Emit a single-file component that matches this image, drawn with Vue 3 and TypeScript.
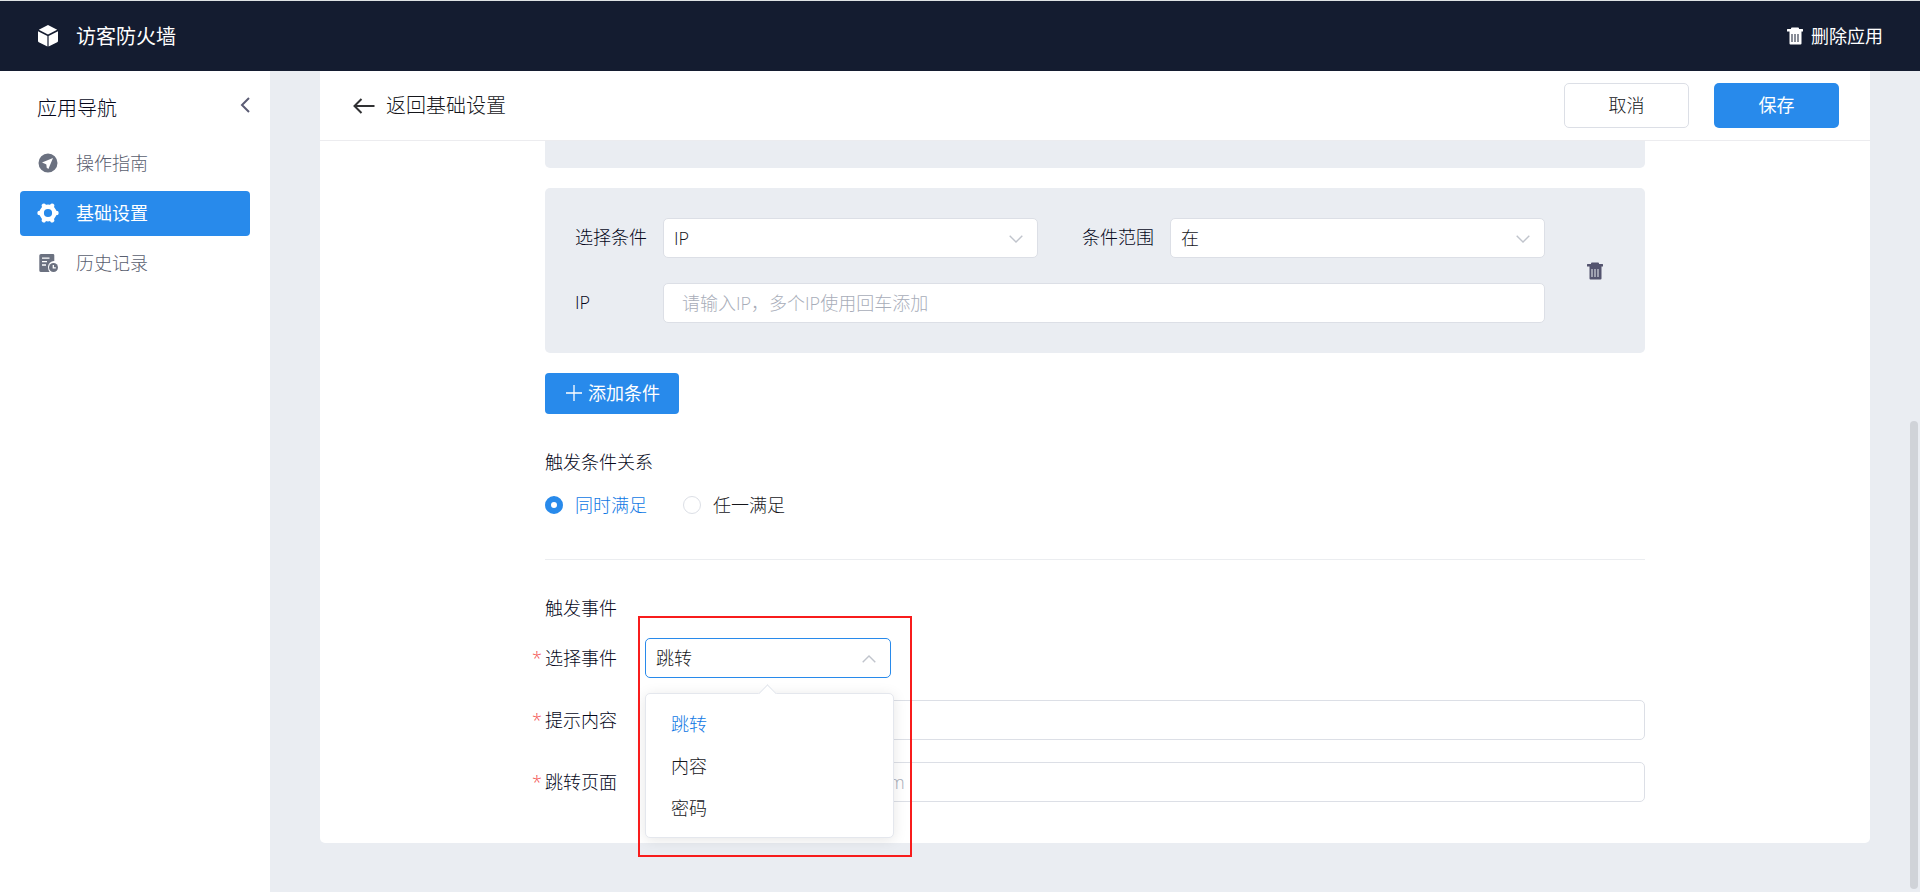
<script setup lang="ts">
import { ref } from 'vue'

interface NavItem {
  key: string
  label: string
}

const navItems: NavItem[] = [
  { key: 'guide', label: '操作指南' },
  { key: 'basic', label: '基础设置' },
  { key: 'history', label: '历史记录' },
]
const activeNav = ref('basic')

const condition = ref('IP')
const range = ref('在')
const ipList = ref('')
const relation = ref('all')
const eventOptions: string[] = ['跳转', '内容', '密码']
const eventType = ref('跳转')
const tipContent = ref('')
const jumpPage = ref('')
</script>

<template>
  <div class="app">
    <header class="topbar">
      <svg class="cube" viewBox="0 0 20 22" aria-hidden="true">
        <path d="M10 0 19.2 4.8 10 9.6.8 4.8Z" />
        <path d="M0 6.2 9.4 11v10.6L.8 17.2a1.4 1.4 0 0 1-.8-1.300Z" />
        <path d="M20 6.200 10.600 11v10.600l8.600-4.400a1.400 1.400 0 0 0 .8-1.300Z" />
      </svg>
      <h1 class="app-name">访客防火墙</h1>
      <button class="delete-app" type="button">
        <svg class="trash" viewBox="0 0 18 18" aria-hidden="true">
          <path fill-rule="evenodd" d="M5 1.500Q5 .5 6 .5h6q1 0 1 1v.5h3.500q.5 0 .5.500v2h-1.500v12q0 1-1 1h-10q-1 0-1-1v-12H1v-2q0-.5.5-.5H5ZM5.500 7v8h1V7Zm3 0v8h1V7Zm3 0v8h1V7Z" />
        </svg>
        <span>删除应用</span>
      </button>
    </header>

    <div class="layout">
      <aside class="sidebar">
        <div class="nav-head">
          <h2 class="nav-title">应用导航</h2>
          <button class="collapse" type="button" aria-label="收起">
            <svg viewBox="0 0 10 16"><path d="M9 1 2 8l7 7" /></svg>
          </button>
        </div>
        <nav class="nav">
          <a
            v-for="item in navItems"
            :key="item.key"
            href="#"
            class="nav-item"
            :class="{ active: item.key === activeNav }"
            @click.prevent="activeNav = item.key"
          >
            <svg v-if="item.key === 'guide'" class="nav-icon" viewBox="0 0 20 20" aria-hidden="true">
              <path fill-rule="evenodd" d="M10 .5a9.500 9.500 0 1 1 0 19 9.500 9.500 0 0 1 0-19ZM15 5 4 9.600l4 1.700.4.400.3 3 1.700 1.400Z" />
            </svg>
            <svg v-else-if="item.key === 'basic'" class="nav-icon" viewBox="0 0 22 22" aria-hidden="true">
              <circle class="ring" cx="11" cy="11" r="6.300" />
              <path class="teeth" d="M2.500 11h.8M18.700 11h.8M6.800 3.700l.4.700M14.800 17.600l.4.700M15.200 3.700l-.4.700M7.200 17.600l-.4.700" />
            </svg>
            <svg v-else class="nav-icon" viewBox="0 0 20 20" aria-hidden="true">
              <path d="M3 1h12q1.300 0 1.300 1.300V8A6 6 0 0 0 10 14q0 2.700 1.600 5H3q-1.700 0-1.700-1.500V2.500Q1.300 1 3 1Z" />
              <path class="line" d="M4 5.200h7.500M4 8.700h5M4 12h4" />
              <circle cx="15.500" cy="14.500" r="4.500" />
              <path class="line" d="M15.300 12v2.800h2.500" />
            </svg>
            <span>{{ item.label }}</span>
          </a>
        </nav>
      </aside>

      <main class="main">
        <section class="card">
          <div class="card-head">
            <a class="back" href="#" @click.prevent>
              <svg viewBox="0 0 22 16" aria-hidden="true"><path d="M8.500 1 1.500 8l7 7M1.500 8h20" /></svg>
              <span>返回基础设置</span>
            </a>
            <div class="actions">
              <button class="btn plain" type="button">取消</button>
              <button class="btn primary" type="button">保存</button>
            </div>
          </div>

          <form class="content" @submit.prevent>
            <div class="panel-tail"></div>

            <div class="panel">
              <div class="panel-fields">
                <div class="panel-row">
                  <div class="field">
                    <label for="condition">选择条件</label>
                    <div class="select-box">
                      <select id="condition" v-model="condition"><option>IP</option></select>
                      <svg class="caret" viewBox="0 0 14 8"><path d="m.7.7 6.300 6.300L13.300.7" /></svg>
                    </div>
                  </div>
                  <div class="field">
                    <label for="range">条件范围</label>
                    <div class="select-box">
                      <select id="range" v-model="range"><option>在</option></select>
                      <svg class="caret" viewBox="0 0 14 8"><path d="m.7.7 6.300 6.300L13.300.7" /></svg>
                    </div>
                  </div>
                </div>
                <div class="field">
                  <label for="ip">IP</label>
                  <input id="ip" v-model="ipList" class="text-input" type="text" placeholder="请输入IP，多个IP使用回车添加" />
                </div>
              </div>
              <button class="remove" type="button" aria-label="删除条件">
                <svg class="trash" viewBox="0 0 18 18">
                  <path fill-rule="evenodd" d="M5 1.500Q5 .5 6 .5h6q1 0 1 1v.5h3.500q.5 0 .5.500v2h-1.500v12q0 1-1 1h-10q-1 0-1-1v-12H1v-2q0-.5.5-.5H5ZM5.500 7v8h1V7Zm3 0v8h1V7Zm3 0v8h1V7Z" />
                </svg>
              </button>
            </div>

            <button class="btn-add" type="button">
              <svg viewBox="0 0 16 16" aria-hidden="true"><path d="M8 0v16M0 8h16" /></svg>
              <span>添加条件</span>
            </button>

            <fieldset class="relation">
              <legend>触发条件关系</legend>
              <div class="radios">
                <label class="radio">
                  <input v-model="relation" type="radio" name="relation" value="all" />
                  <span>同时满足</span>
                </label>
                <label class="radio">
                  <input v-model="relation" type="radio" name="relation" value="any" />
                  <span>任一满足</span>
                </label>
              </div>
            </fieldset>

            <h3 class="section-title">触发事件</h3>

            <div class="event-rows">
              <div class="event-row">
                <label class="required" for="event">选择事件</label>
                <div class="select-box event-select">
                  <select id="event" v-model="eventType">
                    <option v-for="o in eventOptions" :key="o">{{ o }}</option>
                  </select>
                  <svg class="caret" viewBox="0 0 14 8"><path d="M.7 7.300 7 1l6.300 6.300" /></svg>
                  <ul class="menu">
                    <li v-for="o in eventOptions" :key="o" :class="{ chosen: o === eventType }" @click="eventType = o">
                      {{ o }}
                    </li>
                  </ul>
                  <div class="marker"></div>
                </div>
              </div>
              <div class="event-row">
                <label class="required" for="tip">提示内容</label>
                <input id="tip" v-model="tipContent" class="text-input" type="text" />
              </div>
              <div class="event-row">
                <label class="required" for="jump">跳转页面</label>
                <input id="jump" v-model="jumpPage" class="text-input" type="text" placeholder="例如：https://www.baidu.com" />
              </div>
            </div>
          </form>
        </section>
        <div class="scroll-thumb"></div>
      </main>
    </div>
  </div>
</template>

<style>
body {
  margin: 0;
}
</style>

<style scoped>
.app {
  min-height: 100vh;
  display: flex;
  flex-direction: column;
  color: #05071a;
  background: #eaedf2;
  font-family: 'Open Sans', 'Noto Sans CJK SC', sans-serif;
  font-size: 18px;
  font-weight: 300;
  line-height: 24px;
}
.app * {
  box-sizing: border-box;
}
button,
input,
select {
  font: inherit;
  color: inherit;
  margin: 0;
}
button {
  border: 0;
  padding: 0;
  background: none;
  cursor: pointer;
}
h1,
h2,
h3 {
  margin: 0;
  font-weight: inherit;
}
a {
  color: inherit;
  text-decoration: none;
}
svg {
  display: block;
  flex: none;
}

.topbar {
  display: flex;
  align-items: center;
  height: 71px;
  padding: 0 37px 0 38px;
  border-top: 1px solid #dfe3e4;
  background: #141c30;
  color: #fff;
  font-weight: 400;
}
.cube {
  width: 20px;
  height: 22px;
  margin-right: 18px;
  fill: #fff;
}
.app-name {
  padding-top: 2px;
  font-size: 20px;
}
.delete-app {
  display: flex;
  align-items: center;
  gap: 7px;
  margin-left: auto;
}
.trash {
  width: 18px;
  height: 18px;
  fill: currentColor;
}

.layout {
  flex: 1;
  display: flex;
}
.sidebar {
  flex: none;
  width: 270px;
  padding: 20px 20px 0;
  background: #fff;
}
.nav-head {
  display: flex;
  align-items: flex-start;
  justify-content: space-between;
  height: 50px;
  padding: 6px 0 0 17px;
}
.nav-title {
  font-size: 20px;
}
.collapse svg {
  width: 10px;
  height: 16px;
  fill: none;
  stroke: #5b5c74;
  stroke-width: 2;
}
.nav {
  display: flex;
  flex-direction: column;
  gap: 5px;
}
.nav-item {
  display: flex;
  align-items: center;
  gap: 17px;
  height: 45px;
  padding: 0 0 1px 17px;
  border-radius: 4px;
  color: #5a6070;
}
.nav-item.active {
  background: #288aeb;
  color: #fff;
  font-weight: 400;
}
.nav-icon {
  width: 22px;
  height: 20px;
  fill: #6b7180;
}
.nav-item.active .nav-icon {
  height: 22px;
  fill: #fff;
}
.nav-icon .line {
  fill: none;
  stroke: #fff;
  stroke-width: 1.3;
}
.nav-icon .ring {
  fill: none;
  stroke: currentColor;
  stroke-width: 4.4;
}
.nav-icon .teeth {
  fill: none;
  stroke: currentColor;
  stroke-width: 4.4;
  stroke-linecap: round;
}

.main {
  flex: 1;
  min-width: 0;
  position: relative;
  padding: 0 50px 49px;
}
.card {
  border-radius: 0 0 5px 5px;
  background: #fff;
}
.card-head {
  display: flex;
  align-items: center;
  justify-content: space-between;
  height: 70px;
  padding: 0 31px 0 33px;
  border-bottom: 1px solid #ececef;
}
.back {
  display: flex;
  align-items: center;
  gap: 11px;
  color: #15161a;
  font-size: 20px;
}
.back svg {
  width: 22px;
  height: 16px;
  fill: none;
  stroke: #303133;
  stroke-width: 2;
}
.actions {
  display: flex;
  gap: 25px;
}
.btn {
  width: 125px;
  height: 45px;
  padding-bottom: 2px;
  border-radius: 5px;
}
.plain {
  border: 1px solid #dcdfe6;
  background: #fff;
  color: #15161a;
}
.primary {
  background: #288aeb;
  color: #fff;
  font-weight: 400;
}

.content {
  max-width: 1100px;
  margin: 0 auto;
  padding-bottom: 41px;
}
.panel-tail {
  height: 27px;
  border-radius: 0 0 5px 5px;
  background: #eaedf2;
}
.panel {
  display: flex;
  margin-top: 20px;
  padding: 30px 0 30px 30px;
  border-radius: 5px;
  background: #eaedf2;
}
.panel-fields {
  flex: 1;
  display: flex;
  flex-direction: column;
  gap: 25px;
}
.panel-row {
  display: grid;
  grid-template-columns: 1fr 1fr;
  gap: 44px;
}
.field {
  display: flex;
  align-items: center;
}
.field > label {
  flex: none;
  width: 88px;
  padding-bottom: 2px;
}
.select-box {
  position: relative;
  flex: 1;
}
select,
.text-input {
  display: block;
  width: 100%;
  height: 40px;
  border: 1px solid #dcdfe6;
  border-radius: 5px;
  background: #fff;
  color: #15161a;
  outline: 0;
}
select {
  appearance: none;
  padding: 0 40px 0 10px;
}
.text-input {
  min-width: 0;
  padding: 0 18px;
}
.text-input::placeholder {
  color: #a8adb9;
  opacity: 1;
}
.caret {
  position: absolute;
  top: 17px;
  right: 15px;
  width: 14px;
  height: 8px;
  fill: none;
  stroke: #c0c4cc;
  stroke-width: 1.4;
  pointer-events: none;
}
.remove {
  flex: none;
  width: 100px;
  display: flex;
  align-items: center;
  justify-content: center;
  color: #54546f;
}

.btn-add {
  display: flex;
  align-items: center;
  gap: 6px;
  height: 41px;
  margin-top: 20px;
  padding: 0 19px 2px 21px;
  border-radius: 4px;
  background: #288aeb;
  color: #fff;
  font-weight: 400;
}
.btn-add svg {
  width: 16px;
  height: 16px;
  stroke: currentColor;
  stroke-width: 1.3;
}

.relation {
  margin: 36px 0 0;
  padding: 0 0 42px;
  border: 0;
  border-bottom: 1px solid #ebedf0;
}
.relation legend {
  padding: 0;
}
.radios {
  display: flex;
  gap: 36px;
  margin-top: 19px;
}
.radio {
  display: flex;
  align-items: center;
  gap: 12px;
  color: #15161a;
}
.radio input {
  appearance: none;
  width: 18px;
  height: 18px;
  border: 1px solid #dcdfe6;
  border-radius: 50%;
  background: #fff;
}
.radio input:checked {
  border: 6px solid #288aeb;
}
.radio:has(input:checked) {
  color: #0f78e4;
}

.section-title {
  margin-top: 36px;
  font-size: 18px;
}
.event-rows {
  display: flex;
  flex-direction: column;
  gap: 22px;
  margin-top: 18px;
}
.event-row {
  display: flex;
  align-items: center;
}
.required {
  position: relative;
  flex: none;
  width: 100px;
}
.required::before {
  content: '*';
  position: absolute;
  left: -13px;
  color: #f34e4e;
}
.event-select {
  flex: none;
  width: 246px;
}
.event-select select {
  border-color: #288aeb;
}
.menu {
  position: absolute;
  top: 55px;
  left: 0;
  z-index: 2;
  width: 249px;
  margin: 0;
  padding: 9px 0 8px;
  border: 1px solid #e4e7ed;
  border-radius: 5px;
  background: #fff;
  color: #15161a;
  list-style: none;
  box-shadow: 0 2px 14px rgba(0, 0, 0, 0.1);
}
.menu::before {
  content: '';
  position: absolute;
  top: -7px;
  left: 115px;
  width: 12px;
  height: 12px;
  border: 1px solid #e4e7ed;
  border-right: 0;
  border-bottom: 0;
  background: #fff;
  transform: rotate(45deg);
}
.menu li {
  position: relative;
  padding-left: 25px;
  line-height: 42px;
  cursor: pointer;
}
.menu .chosen {
  color: #0f78e4;
}
.marker {
  position: absolute;
  top: -22px;
  left: -7px;
  z-index: 3;
  width: 274px;
  height: 241px;
  border: 2px solid #f81c1c;
  pointer-events: none;
}
.scroll-thumb {
  position: absolute;
  top: 350px;
  right: 2px;
  bottom: 3px;
  width: 8px;
  border-radius: 4px;
  background: #d0d3d8;
}
</style>
